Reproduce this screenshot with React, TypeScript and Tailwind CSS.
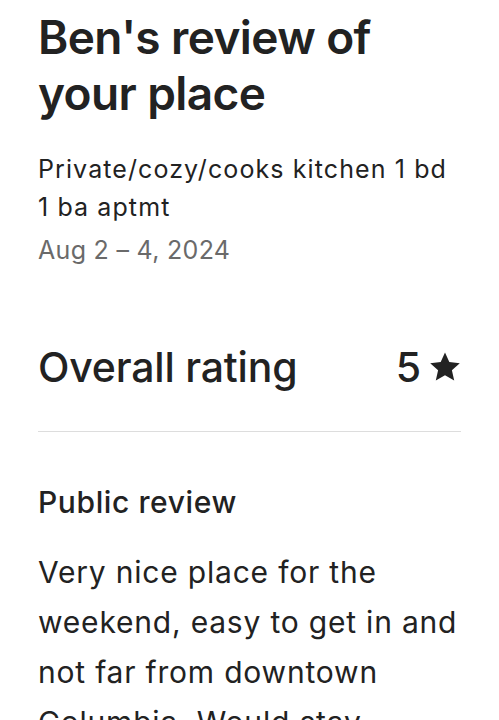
export default function App() {
  return (
    <div className="min-h-screen bg-white px-[38px] pt-[9px] text-[#222222] font-['Inter',sans-serif]">
      {/* Title */}
      <h1 className="text-[46px] leading-[56px] font-semibold tracking-[-0.6px]">
        Ben's review of your place
      </h1>

      {/* Listing name and dates */}
      <p className="mt-[29px] text-[25px] leading-[38px] tracking-[1.1px]">
        Private/cozy/cooks kitchen 1 bd 1 ba aptmt
      </p>
      <p className="mt-[5px] text-[25px] leading-[38px] text-[#6a6a6a] tracking-[0.3px]">
        Aug 2 – 4, 2024
      </p>

      {/* Overall rating */}
      <div className="mt-[74px] flex items-center justify-between">
        <span className="text-[41px] leading-[48px] font-medium tracking-[-0.2px]">Overall rating</span>
        <span className="flex items-center gap-[8px] text-[41px] leading-[48px] font-medium">
          5
          <svg viewBox="0 0 32 32" className="w-[32px] h-[32px]" fill="#222222">
            <path d="M16 1.5l4.3 9.6 10.5 1.1-7.9 7.1 2.3 10.3L16 24.3 6.8 29.6l2.3-10.3-7.9-7.1 10.5-1.1z" />
          </svg>
        </span>
      </div>

      <div className="mt-[40px] h-px bg-[#dddddd]" />

      {/* Public review */}
      <h2 className="mt-[52px] text-[30px] leading-[36px] font-medium tracking-[0.6px]">Public review</h2>
      <p className="mt-[27px] text-[30px] leading-[50px] tracking-[0.8px]">
        Very nice place for the weekend, easy to get in and not far from downtown Columbia. Would stay again.
      </p>
    </div>
  );
}
